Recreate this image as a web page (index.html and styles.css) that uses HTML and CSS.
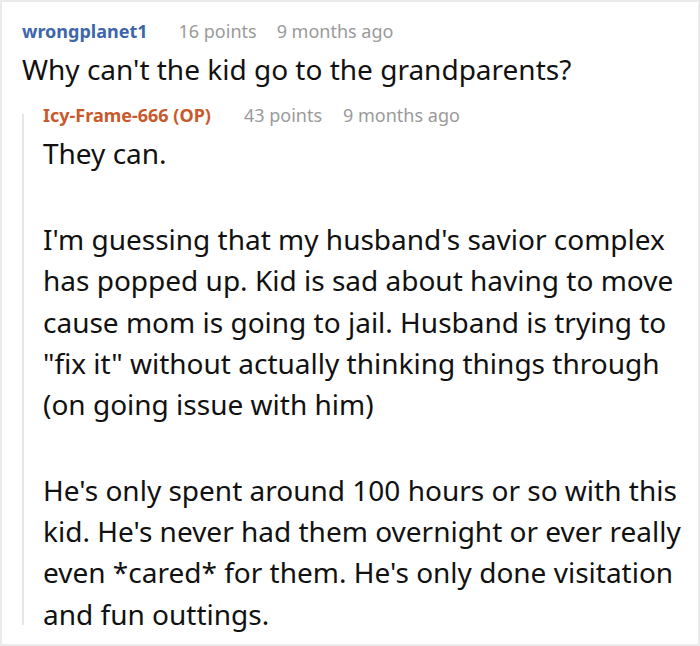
FILE: index.html
```html
<!DOCTYPE html>
<html lang="en">
<head>
<meta charset="utf-8">
<title>Comment thread</title>
<link rel="stylesheet" href="styles.css">
</head>
<body>
<div class="frame">
  <div class="comment">
    <div class="meta">
      <span class="user user-blue">wrongplanet1</span>
      <span class="points">16 points</span>
      <span class="time">9 months ago</span>
    </div>
    <p class="text question">Why can't the kid go to the grandparents?</p>
    <div class="reply">
      <div class="meta reply-meta">
        <span class="user user-orange">Icy-Frame-666 (OP)</span>
        <span class="points">43 points</span>
        <span class="time">9 months ago</span>
      </div>
      <div class="reply-body">
        <p class="text para">They can.</p>
        <p class="text para">I'm guessing that my husband's savior complex has popped up. Kid is sad about having to move cause mom is going to jail. Husband is trying to "fix it" without actually thinking things through (on going issue with him)</p>
        <p class="text para last">He's only spent around 100 hours or so with this kid. He's never had them overnight or ever really even *cared* for them. He's only done visitation and fun outtings.</p>
      </div>
    </div>
  </div>
</div>
</body>
</html>
```

FILE: styles.css
```css
html, body {
  margin: 0;
  padding: 0;
  background: #ffffff;
}

.frame {
  box-sizing: border-box;
  width: 700px;
  height: 646px;
  border: 2px solid #ebebeb;
  overflow: hidden;
  font-family: "Noto Sans", "DejaVu Sans", sans-serif;
  color: #111111;
}

.comment {
  padding: 17px 6px 0 20px;
}

.meta {
  display: flex;
  align-items: baseline;
  font-size: 18px;
  line-height: 24px;
  white-space: nowrap;
}

.user {
  font-weight: 700;
  margin-right: 31px;
}

.user-blue {
  color: #3d66ab;
}

.user-orange {
  color: #c9592b;
  margin-right: 33px;
}

.points {
  color: #9a9a9a;
  margin-right: 20px;
}

.reply-meta .points {
  margin-right: 21px;
}

.time {
  color: #9a9a9a;
}

.text {
  margin: 0;
  font-size: 28px;
  line-height: 41.2px;
}

.question {
  margin-top: 6px;
}

.reply {
  display: flow-root;
  margin-top: 24px;
  border-left: 2px solid #e6e6e6;
  padding-left: 19px;
}

.reply-meta {
  margin-top: -11px;
}

.reply-body {
  display: flow-root;
  margin-top: 6px;
}

.para {
  margin-bottom: 44.8px;
}

.para.last {
  margin-bottom: -10px;
}
```
